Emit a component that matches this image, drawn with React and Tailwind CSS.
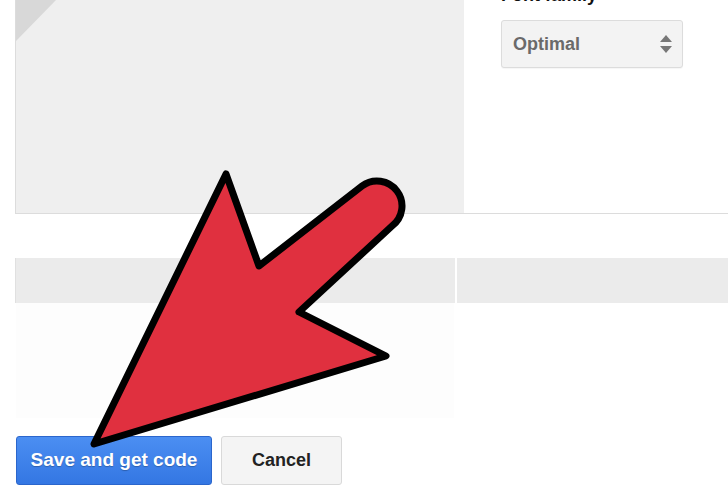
import React from "react";

const Arrow = () => (
  <svg
    className="pointer-events-none absolute left-0 top-0"
    width="728"
    height="486"
    viewBox="0 0 728 486"
  >
    <path
      d="M94 444 L226 174 L259 266 L362 186 A22 22 0 0 1 392 226 L299 312 L386 356 Z"
      fill="#e0303f"
      stroke="#000"
      strokeWidth="7"
      strokeLinejoin="round"
    />
  </svg>
);

const Spinner = () => (
  <svg width="14" height="20" viewBox="0 0 14 20">
    <path d="M7 1 L13 8 H1 Z" fill="#777" />
    <path d="M7 19 L13 12 H1 Z" fill="#777" />
  </svg>
);

export default function App() {
  return (
    <div className="relative h-[486px] w-[728px] overflow-hidden bg-white font-['Liberation_Sans',Arial,sans-serif]">
      {/* top panel: preview + options */}
      <div className="ml-[15px] flex h-[214px] border-b border-l border-[#dcdcdc]">
        <div className="relative w-[448px] bg-[#efefef]">
          <svg className="absolute left-0 top-0" width="40" height="41" viewBox="0 0 40 41">
            <path d="M0 0 H40 L0 41 Z" fill="#d8d8d8" />
          </svg>
        </div>
        <div className="flex-1 pl-[37px]">
          <div className="-mt-[15px] text-[18px] font-bold leading-[20px] text-[#111]">
            Font family
          </div>
          <div className="mt-[15px] flex h-[48px] w-[182px] items-center justify-between rounded-[3px] border border-[#dcdcdc] bg-[#f3f3f3] pl-[11px] pr-[9px] shadow-[0_1px_1px_rgba(0,0,0,0.04)]">
            <span className="text-[18px] font-bold text-[#6a6a6a]">Optimal</span>
            <Spinner />
          </div>
        </div>
      </div>

      {/* table header band */}
      <div className="ml-[15px] mt-[44px] flex h-[45px] border-l border-[#e0e0e0]">
        <div className="w-[439px] bg-[#ebebeb]" />
        <div className="w-[2px] bg-white" />
        <div className="flex-1 bg-[#ebebeb]" />
      </div>
      <div className="ml-[16px] h-[115px] w-[438px] bg-[#fdfdfd]" />

      {/* actions */}
      <div className="ml-[16px] mt-[18px] flex gap-[9px]">
        <button className="h-[49px] w-[196px] rounded-[3px] border border-[#2b66cc] bg-gradient-to-b from-[#4b8ef2] to-[#3477e3] text-[19px] font-bold text-white [text-shadow:0_1px_1px_rgba(0,0,0,0.25)]">
          Save and get code
        </button>
        <button className="h-[49px] w-[121px] rounded-[3px] border border-[#d9d9d9] bg-[#f4f4f4] text-[18px] font-bold text-[#222]">
          Cancel
        </button>
      </div>

      <Arrow />
    </div>
  );
}
